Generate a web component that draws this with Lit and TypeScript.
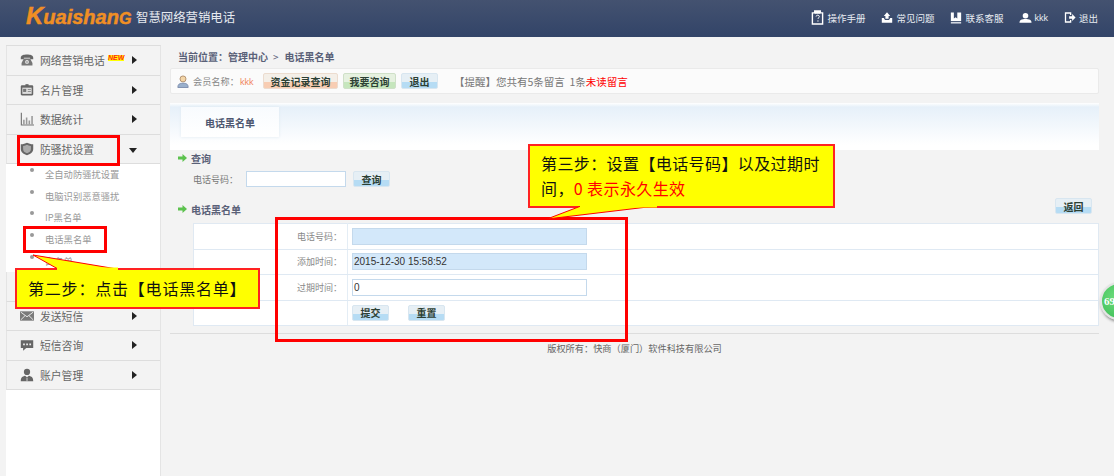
import { LitElement, html, css, svg } from "lit";
import { customElement } from "lit/decorators.js";

const ICONS: Record<string, unknown> = {
  phone: svg`<path d="M1 6c0-3 4-4 8-4s8 1 8 4v2h-4V6H5v2H1z" fill="#666"/><path d="M5 7h8l3 6v3H2v-3z" fill="#777"/><circle cx="9" cy="11.5" r="2.4" fill="#eee"/><circle cx="9" cy="11.5" r="1" fill="#666"/>`,
  card: svg`<rect x="1" y="3" width="16" height="13" rx="1.5" fill="#666"/><rect x="3" y="6" width="12" height="8" fill="#ddd"/><rect x="7" y="1.5" width="4" height="3" fill="#666"/><rect x="4" y="7.5" width="4" height="4" fill="#777"/><path d="M10 8h4v1h-4zm0 2.500h4v1h-4z" fill="#777"/>`,
  chart: svg`<path d="M1 1h1.500v15H18v1.500H1z" fill="#777"/><path d="M4 10h2v6H4zm3.500-3h2v9h-2zm3.500 4h2v5h-2zm3.500-6h2v11h-2z" fill="#999"/>`,
  shield: svg`<path d="M1 3c3 0 6-1 8-2 2 1 5 2 8 2v6c0 4-4 7-8 8-4-1-8-4-8-8z" fill="#666"/><path d="M4 5c2 0 4-1 5-1.500C10 4 12 5 14 5v4c0 3-2 4.500-5 5.500C6 13.500 4 12 4 9z" fill="#aaa"/>`,
  mail: svg`<rect x="0" y="3" width="18" height="12" fill="#7a7a7a"/><path d="M1 4l8 6 8-6M1 14l5.500-5.500M17 14l-5.500-5.500" stroke="#eee" stroke-width="1.200" fill="none"/>`,
  chat: svg`<path d="M1 3h16v10H8l-4 3.500V13H1z" fill="#666"/><path d="M4 7h2.200v2.200H4zm4 0h2.200v2.200H8zm4 0h2.200v2.200H12z" fill="#eee"/>`,
  user: svg`<circle cx="9" cy="5" r="4" fill="#666"/><path d="M1 17c0-5 2-6 5.500-7L9 12l2.500-2c3.500 1 5.500 2 5.500 7z" fill="#666"/><path d="M9 12.500v4.500" stroke="#eee"/>`,
  clip: svg`<path d="M1.500 3H4V1h6v2h2.500v12h-11z" fill="none" stroke="#fff" stroke-width="1.500"/><rect x="4" y="1" width="6" height="3" fill="#fff"/><path d="M5.500 7c0-2 3.500-2 3.500 0 0 1.200-1.500 1.200-1.500 2.500M7.500 11v1.500" stroke="#fff" fill="none" stroke-width="1"/>`,
  up: svg`<path d="M7.500 1l4 4.500H9.500V9h-4V5.500h-2z" fill="#fff"/><path d="M1 8h2.500l1.500 2.500h5L11.500 8H14v6H1z" fill="#fff"/>`,
  book: svg`<path d="M1 1h3.500v7l2-1.500 2 1.500V1H13v10H1z" fill="#fff"/><path d="M1 12h12v2H1z" fill="#cfd5df"/>`,
  head: svg`<circle cx="7" cy="3.500" r="3" fill="#fff"/><path d="M0.500 11c0-3 2.500-4 6.500-4s6.500 1 6.500 4z" fill="#fff"/>`,
  exit: svg`<path d="M1 1h7.500v3H7V2.500H2.500v9H7V10h1.500v3H1z" fill="#fff"/><path d="M6 5.500h3.500V3L13.500 7l-4 4V8.500H6z" fill="#fff"/>`,
};

const icon = (n: string, w = 14, h = 14, vb = "0 0 18 18") =>
  html`<svg class="ic" width=${w} height=${h} viewBox=${vb}>${ICONS[n]}</svg>`;

@customElement("app-root")
export class AppRoot extends LitElement {
  static styles = css`
    :host {
      display: block;
      width: 1114px;
      height: 476px;
      position: relative;
      overflow: hidden;
      background: #f3f3f3;
      font-family: "Noto Sans CJK SC", "Liberation Sans", sans-serif;
      font-size: 10px;
      color: #777;
      text-spacing-trim: space-all;
    }
    .ic { display: block; flex: none; }
    header {
      height: 37px;
      display: flex;
      align-items: center;
      justify-content: space-between;
      background: linear-gradient(#445270, #324468);
      box-sizing: border-box;
      padding: 0 16px 0 26px;
      color: #e8ecf2;
    }
    .brand { display: flex; align-items: center; padding-bottom: 3px; }
    .logo {
      font: italic bold 20px "Liberation Sans", sans-serif;
      -webkit-text-stroke: 0.5px #f08f24;
      color: #f08f24;
      line-height: 24px;
      width: 110px;
      white-space: nowrap;
    }
    .logo big { font-size: 24px; }
    .logo small { font-size: 16px; }
    .slogan { font-size: 12.400px; color: #e6e9ef; }
    .tools { display: flex; align-items: center; gap: 16px; padding-bottom: 2px; }
    .tool { display: flex; align-items: center; gap: 3px; font-size: 9.500px; }
    .tool.name { font: 9px "Liberation Sans", sans-serif; gap: 2px; }
    .layout {
      display: flex;
      height: 439px;
      box-sizing: border-box;
      padding: 8px 15px 0 6px;
    }
    aside {
      width: 155px;
      flex: none;
      background: #fff;
      border-top: 1px solid #ddd;
      border-right: 1px solid #e4e4e4;
      box-sizing: border-box;
    }
    .mi {
      height: 29.500px;
      box-sizing: border-box;
      background: #f3f3f3;
      border-bottom: 1px solid #ddd;
      border-left: 1px solid #e4e4e4;
      display: flex;
      align-items: center;
      padding-left: 13px;
      gap: 6px;
      font-size: 10.800px;
      color: #666;
      position: relative;
    }
    .mi span.t { white-space: nowrap; }
    .new { position: absolute; left: 101px; top: 9px; font: italic bold 7px "Liberation Sans", sans-serif; color: #f22; background: #ff0; line-height: 6px; }
    .arr {
      position: absolute; left: 125px; top: 10px;
      border-left: 5px solid #222; border-top: 4.500px solid transparent; border-bottom: 4.500px solid transparent;
    }
    .arr.down {
      left: 122px; top: 13px;
      border-top: 5px solid #222; border-left: 4.500px solid transparent; border-right: 4.500px solid transparent; border-bottom: 0;
    }
    .sub { background: #fff; height: 108px; display: flex; flex-direction: column; overflow: hidden; margin-top: -1px; margin-bottom: 1px; }
    .sub div {
      height: 21.700px; flex: none;
      display: flex; align-items: center;
      padding-left: 39px;
      color: #999; font-size: 9.300px;
      position: relative;
      white-space: nowrap;
    }
    .sub div::before {
      content: ""; position: absolute; left: 24px; top: 5px; width: 4px; height: 4px; border-radius: 50%; background: #999;
    }
    main { flex: 1; padding-left: 9px; min-width: 0; display: flex; flex-direction: column; }
    .crumb { height: 24px; padding-left: 8px; display: flex; align-items: center; font-size: 10px; font-weight: 700; color: #5a6178; margin-top: -1px; white-space: nowrap; }
    .crumb i { font-style: normal; margin: 0 6px 0 5px; font-weight: 400; }
    .bar {
      height: 26px; box-sizing: border-box;
      background: #fbfbfb; border: 1px solid #eaeaea; border-radius: 2px;
      display: flex; align-items: center; padding-left: 6px; font-size: 9.200px; color: #888;
    }
    .bar .who { margin-left: 4px; width: 70px; white-space: nowrap; }
    .kkk { color: #f08860; font: 9px "Liberation Sans", sans-serif; margin-left: 1px; }
    .btn {
      display: inline-flex; align-items: center; justify-content: center;
      height: 16px; box-sizing: border-box; flex: none;
      border: 1px solid #d8e6f0; border-radius: 2px;
      font-size: 10px; font-weight: 700; color: #2c4034;
      background: linear-gradient(#e6eff5 55%, #b6dcf4 55%);
      white-space: nowrap;
    }
    .btn.or { width: 75px; border-color: #ecdccf; background: linear-gradient(#f4efe8 55%, #f8cdb3 55%); }
    .btn.gr { width: 53px; margin-left: 5px; border-color: #cfe0c8; background: linear-gradient(#e6f1e0 55%, #c6e6bd 55%); }
    .btn.bl { width: 37px; margin-left: 5px; }
    .btn.sq { width: 37px; }
    .tip { margin-left: 16px; font-size: 10.500px; color: #777; white-space: nowrap; }
    .tip b { font-weight: 400; color: #f00; }
    .panel {
      height: 47px; margin-top: 9px;
      background: linear-gradient(#fff 0, #e6f0f9 4px, #fff 42px);
      padding-left: 11px;
    }
    .tab {
      width: 98px; height: 30px;
      display: flex; align-items: center; justify-content: center;
      background: linear-gradient(#f8fbfe, #fff);
      box-shadow: 0 0 3px #e0eaf2;
      font-size: 10px; font-weight: 700; color: #4e5770;
      position: relative; top: 4px;
    }
    .sec { display: flex; align-items: center; gap: 4px; padding-left: 8px; font-size: 10px; font-weight: 700; color: #5a6178; height: 16px; }
    .arrow { width: 9px; height: 8px; flex: none; }
    .q { display: flex; align-items: center; height: 16px; margin-top: 5px; padding-left: 23px; font-size: 9px; }
    .q .lb { width: 53px; }
    .input {
      box-sizing: border-box; height: 17px; border: 1px solid #c4d9ec; background: #fff;
      font: 10px "Liberation Sans", sans-serif; color: #333; display: flex; align-items: center; padding-left: 1px;
    }
    .q .input { width: 100px; height: 16px; margin-right: 7px; }
    .sechead { display: flex; justify-content: space-between; align-items: center; margin-top: 14px; height: 16px; }
    table {
      margin: 6px 0 0 23px; width: 906px;
      border-collapse: collapse; background: #fff; border: 1px solid #e0e9f2;
      height: 102px;
    }
    td { border-bottom: 1px solid #dfe9f3; padding: 0; height: 25.500px; box-sizing: border-box; }
    td.l { width: 154px; text-align: right; padding-right: 5px; border-right: 1px solid #e4edf5; color: #888; font-size: 9px; }
    td .input { width: 235px; margin-left: 4px; }
    td .input.fill { background: #d3e8fa; }
    .acts { display: flex; gap: 19px; margin-left: 4px; }
    .rule { height: 1px; background: #ddd; margin-top: 7px; }
    footer { text-align: center; padding-top: 7px; color: #666; font-size: 9.200px; }
    .return { margin: 0 7px 6px 0; }

    /* overlays */
    .ring { position: absolute; border: 3px solid #f00; box-sizing: border-box; }
    .r1 { left: 17px; top: 135px; width: 103px; height: 31px; }
    .r2 { left: 23px; top: 226px; width: 84px; height: 27px; }
    .r3 { left: 275px; top: 217px; width: 353px; height: 125px; }
    .call {
      position: absolute; background: #ff0; border: 2px solid #f22;
      box-sizing: border-box; color: #111; font-size: 16px; font-family: "Noto Sans CJK SC", sans-serif;
      white-space: nowrap;
    }
    .c2 { left: 15px; top: 268px; width: 245px; height: 41px; padding-left: 11px; line-height: 37px; letter-spacing: 0.800px; }
    .c3 { left: 528px; top: 144px; width: 307px; height: 64px; padding: 5px 0 0 11px; line-height: 25px; letter-spacing: 0.400px; }
    .call i { font-style: normal; color: #f00; }
    .tail { position: absolute; left: 0; top: 0; overflow: visible; pointer-events: none; }
    .badge {
      position: absolute; left: 1100px; top: 282px; width: 38px; height: 38px; border-radius: 50%;
      background: radial-gradient(circle at 40% 40%, #6ddc7c, #35b850);
      border: 2px solid #e4e4e4; box-sizing: border-box;
      box-shadow: 1px 2px 3px #888;
      color: #fff; font: 700 11px "Liberation Serif", serif; line-height: 34px; padding-left: 2px;
    }
  `;

  private mi(ic: string, t: string, open = false, isNew = false) {
    return html`<div class="mi">${icon(ic)}<span class="t">${t}</span>
      ${isNew ? html`<span class="new">NEW</span>` : ""}
      <span class="arr ${open ? "down" : ""}"></span></div>`;
  }

  private arrow() {
    return html`<svg class="arrow" viewBox="0 0 9 8"><path d="M0 2.500h4.500V0L9 4 4.500 8V5.500H0z" fill="#5cc24e"/></svg>`;
  }

  render() {
    return html`
      <header>
        <div class="brand">
          <div class="logo"><big>K</big>uaishan<small>G</small></div>
          <div class="slogan">智慧网络营销电话</div>
        </div>
        <div class="tools">
          <div class="tool">${icon("clip", 13, 15, "0 0 14 16")}操作手册</div>
          <div class="tool">${icon("up", 12, 13, "0 0 15 15")}常见问题</div>
          <div class="tool">${icon("book", 12, 14, "0 0 14 15")}联系客服</div>
          <div class="tool name">${icon("head", 13, 12, "0 0 14 12")}kkk</div>
          <div class="tool">${icon("exit", 12, 13, "0 0 14 14")}退出</div>
        </div>
      </header>
      <div class="layout">
        <aside>
          ${this.mi("phone", "网络营销电话", false, true)}
          ${this.mi("card", "名片管理")}
          ${this.mi("chart", "数据统计")}
          ${this.mi("shield", "防骚扰设置", true)}
          <div class="sub">
            <div>全自动防骚扰设置</div>
            <div>电脑识别恶意骚扰</div>
            <div>IP黑名单</div>
            <div>电话黑名单</div>
            <div>白名单</div>
          </div>
          <div class="mi"></div>
          ${this.mi("mail", "发送短信")}
          ${this.mi("chat", "短信咨询")}
          ${this.mi("user", "账户管理")}
        </aside>
        <main>
          <div class="crumb">当前位置：管理中心<i>&gt;</i>电话黑名单</div>
          <div class="bar">
            <svg width="12" height="15" viewBox="0 0 14 16"><circle cx="7" cy="5" r="3.500" fill="#f4d6a8" stroke="#a86"/><path d="M1 15c0-4 2-5 6-5s6 1 6 5z" fill="#9ab0cc" stroke="#78a"/></svg>
            <span class="who">会员名称：<span class="kkk">kkk</span></span>
            <span class="btn or">资金记录查询</span>
            <span class="btn gr">我要咨询</span>
            <span class="btn bl">退出</span>
            <span class="tip">【提醒】您共有5条留言&nbsp; 1条<b>未读留言</b></span>
          </div>
          <div class="panel"><div class="tab">电话黑名单</div></div>
          <div class="sec">${this.arrow()}查询</div>
          <div class="q"><span class="lb">电话号码：</span><span class="input"></span><span class="btn sq">查询</span></div>
          <div class="sechead">
            <div class="sec">${this.arrow()}电话黑名单</div>
            <span class="btn sq return">返回</span>
          </div>
          <table>
            <tr><td class="l">电话号码：</td><td><div class="input fill"></div></td></tr>
            <tr><td class="l">添加时间：</td><td><div class="input fill">2015-12-30 15:58:52</div></td></tr>
            <tr><td class="l">过期时间：</td><td><div class="input">0</div></td></tr>
            <tr><td class="l"></td><td><div class="acts"><span class="btn sq">提交</span><span class="btn sq">重置</span></div></td></tr>
          </table>
          <div class="rule"></div>
          <footer>版权所有：快商（厦门）软件科技有限公司</footer>
        </main>
      </div>

      <div class="ring r1"></div>
      <div class="ring r2"></div>
      <div class="ring r3"></div>

      <div class="call c2">第二步：点击【电话黑名单】</div>
      <div class="call c3">第三步：设置【电话号码】以及过期时<br />间，<i>0 表示永久生效</i></div>
      <svg class="tail" width="1114" height="476">
        <path d="M33 255L58 269H117z" fill="#ff0" stroke="#f00"/>
        <path d="M57 269H118" stroke="#ff0" stroke-width="3"/>
        <path d="M547 219L581 206H656z" fill="#ff0" stroke="#f00"/>
        <path d="M580 206H657" stroke="#ff0" stroke-width="3"/>
      </svg>
      <div class="badge">69</div>
    `;
  }
}
